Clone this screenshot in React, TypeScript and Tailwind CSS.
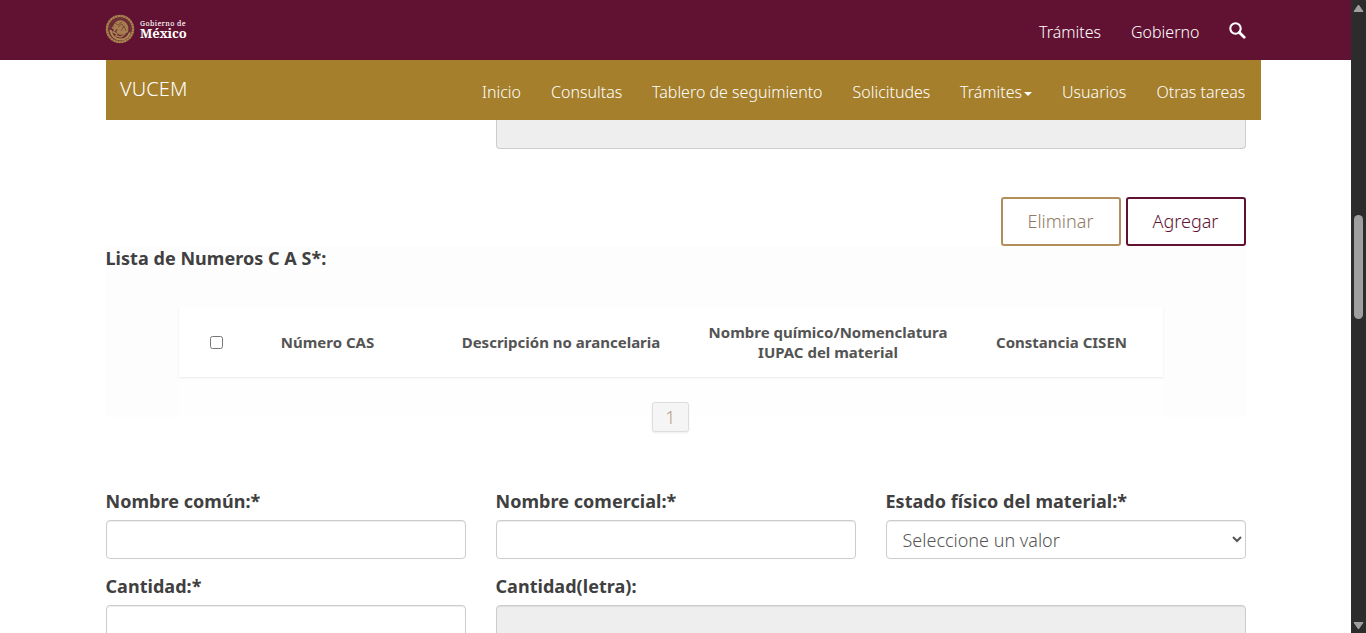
import React from "react";

const navItems = [
  { label: "Inicio", width: "w-[39px]" },
  { label: "Consultas", width: "w-[71px]" },
  { label: "Tablero de seguimiento", width: "w-[170.5px]" },
  { label: "Solicitudes", width: "w-[77.5px]" },
  { label: "Trámites", width: "w-[72px]", caret: true },
  { label: "Usuarios", width: "w-[64.5px]" },
  { label: "Otras tareas", width: "w-[89px]" },
];

function Seal() {
  return (
    <svg className="-mt-[2px] h-[30px] w-[30px] shrink-0" viewBox="0 0 30 30" fill="none">
      <circle cx="15" cy="15" r="13" stroke="#8c6042" strokeWidth="2.6" />
      <circle cx="15" cy="15" r="13" stroke="#ad8753" strokeWidth="2" strokeDasharray="1.8 1" />
      <circle cx="15" cy="15" r="10.9" fill="#6b2a35" stroke="#7a4038" strokeWidth="0.8" />
      <path d="M9 10c2-4 8-5 11-2 3 2 4 6 3 10l-3 2-5 1-4-3 2-3-3 1-2-3Z" fill="#a67d4e" />
      <path d="M10 9l3 2 4-3M13 13l4-3 2 4M16 17l3-5 2 5" stroke="#7d4a3a" strokeWidth="0.9" />
      <path d="M5.5 16c1 6 5 9.500 10 9.500s8-3 9.500-7" stroke="#b08a55" strokeWidth="2" />
      <path d="M7 13l3 3-2 2 4 2-1 2 5 1 4-3" stroke="#a67d4e" strokeWidth="1.500" />
    </svg>
  );
}

function Header() {
  return (
    <header className="flex h-[60px] shrink-0 justify-between bg-[#611232] pr-[105px] pl-[105px]">
      <div className="flex h-[60px] items-center gap-[5px] text-white">
        <Seal />
        <div className="-mt-[3px] flex flex-col font-['Noto_Serif','Liberation_Serif',serif]">
          <span className="h-[9px] text-[7px] leading-[9px] font-medium tracking-[0.38px] whitespace-nowrap">Gobierno de</span>
          <span className="h-[10px] text-[13px] leading-[10px] font-bold tracking-[-0.2px]">México</span>
        </div>
      </div>
      <div className="flex items-center gap-[30px] pt-[4px] text-[16px] font-light text-white">
        <span className="w-[62px] whitespace-nowrap">Trámites</span>
        <span className="w-[68px] whitespace-nowrap">Gobierno</span>
        <svg className="-mt-[4px] h-[17px] w-[17px]" viewBox="0 0 17 17" fill="none" stroke="white">
          <circle cx="6.5" cy="6.5" r="5.2" strokeWidth="2.1" />
          <path d="m10.4 10.4 4.8 4.8" strokeWidth="2.8" strokeLinecap="round" />
        </svg>
      </div>
    </header>
  );
}

function SubNav() {
  return (
    <nav className="ml-[106px] flex h-[60px] w-[1155px] shrink-0 justify-between bg-[#a57f2c] pr-[15.5px] pl-[14px] text-white">
      <span className="pt-[15px] text-[20px] leading-[28px] font-light tracking-[0.1px]">VUCEM</span>
      <div className="mt-[20px] flex h-[24px] gap-[30px] text-[16px] leading-6 font-light">
        {navItems.map((n) => (
          <span key={n.label} className={`flex items-center whitespace-nowrap ${n.width}`}>
            {n.label}
            {n.caret && <span className="mt-[3px] ml-[2px] border-x-4 border-t-4 border-x-transparent border-t-white" />}
          </span>
        ))}
      </div>
    </nav>
  );
}

const inputBase = "h-[39px] w-full rounded border border-[#ccc] shadow-[inset_0_1px_1px_rgba(0,0,0,0.075)]";

function Label({ children }: { children: React.ReactNode }) {
  return <label className="-ml-[0.5px] block h-[32px] pt-[1px] text-[18px] leading-[25px] font-bold tracking-[0.04px] whitespace-nowrap text-[#404041]">{children}</label>;
}

function Scrollbar() {
  return (
    <div className="flex w-[15px] shrink-0 flex-col items-center bg-[#2c2c2c]">
      <svg className="mt-[4px] h-[9px] w-[11px]" viewBox="0 0 11 9"><path d="M5.5 1 10 7.5H1Z" fill="#9f9f9f" stroke="#9f9f9f" strokeLinejoin="round" /></svg>
      <div className="mt-[202px] h-[104px] w-[9px] rounded-full bg-[#9f9f9f]" />
      <svg className="mt-auto mb-[3px] h-[9px] w-[11px]" viewBox="0 0 11 9"><path d="M5.5 8 10 1.5H1Z" fill="#9f9f9f" stroke="#9f9f9f" strokeLinejoin="round" /></svg>
    </div>
  );
}

export default function App() {
  return (
    <div className="flex h-[633px] w-[1366px] overflow-hidden bg-white font-['Noto_Sans',sans-serif]">
      <div className="flex w-[1351px] shrink-0 flex-col">
        <Header />
        <SubNav />
        <main className="ml-[106px] w-[1140px] text-[#404041]">
          <div className="ml-[390px] h-[29px] w-[750px] rounded-b border border-t-0 border-[#ccc] bg-[#eee]" />
          <div className="mt-[48px] flex h-[49px] justify-end gap-[5px] text-[18px] font-light">
            <button className="w-[120px] rounded-[3px] border-2 border-[#b38e5d] bg-white pr-px text-[#917a65]">Eliminar</button>
            <button className="w-[120px] rounded-[3px] border-2 border-[#611232] bg-white pr-px text-[#611232]">Agregar</button>
          </div>
          <section className="h-[171px] bg-[#fdfdfd]">
            <h2 className="-ml-[0.5px] h-[61px] text-[18px] leading-[25px] font-bold tracking-[0.04px]">Lista de Numeros C A S*:</h2>
            <div className="ml-[73px] h-[110px] w-[984px] bg-[#fefefe]">
              <div className="flex h-[70px] items-center bg-white text-center text-[15px] leading-[20px] font-bold text-[#545454] shadow-[0_1px_2px_rgba(0,0,0,0.08)]">
                <div className="flex w-[75px] justify-center"><input type="checkbox" className="h-[13px] w-[13px]" /></div>
                <div className="w-[147px]">Número CAS</div>
                <div className="w-[319px]"><span className="ml-px">Descripción no arancelaria</span></div>
                <div className="w-[216px]"><div className="-mx-[15px] whitespace-nowrap">Nombre químico/Nomenclatura<br />IUPAC del material</div></div>
                <div className="w-[227px] pl-[24px]">Constancia CISEN</div>
              </div>
              <div className="mt-[25px] ml-[473px] flex h-[30px] w-[37px] items-center justify-center rounded-[3px] border border-[#ddd] bg-[#f5f5f5] text-[18px] font-light text-[#b59b83] shadow-[0_1px_2px_rgba(0,0,0,0.08)]">1</div>
            </div>
          </section>
          <div className="mt-[71px] grid grid-cols-3 gap-x-[30px] gap-y-[14px]">
            <div><Label>Nombre común:*</Label><input className={`${inputBase} block bg-white`} /></div>
            <div><Label>Nombre comercial:*</Label><input className={`${inputBase} block bg-white`} /></div>
            <div>
              <Label>Estado físico del material:*</Label>
              <select className={`${inputBase} block bg-white pl-[11.5px] text-[18px] font-light text-[#555]`}>
                <option>Seleccione un valor</option>
              </select>
            </div>
            <div><Label>Cantidad:*</Label><input className={`${inputBase} block bg-white`} /></div>
            <div className="col-span-2"><Label>Cantidad(letra):</Label><input disabled className={`${inputBase} block bg-[#eee]`} /></div>
          </div>
        </main>
      </div>
      <Scrollbar />
    </div>
  );
}
